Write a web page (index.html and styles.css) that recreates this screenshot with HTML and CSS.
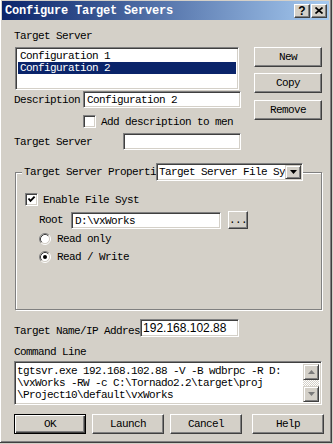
FILE: index.html
```html
<!DOCTYPE html>
<html>
<head>
    <title>Configure Target Servers</title>
    <link rel="stylesheet" href="styles.css">
</head>
<body>
<div class="window">
    <div class="titlebar">
        <span class="title">Configure Target Servers</span>
        <div class="tbtns">
            <span class="tbtn help-q">?</span>
            <span class="tbtn">
                <svg width="8" height="7" viewBox="0 0 8 7"><path d="M0.5 0.5 L7.5 6.5 M7.5 0.5 L0.5 6.5" stroke="#000" stroke-width="1.7"/></svg>
            </span>
        </div>
    </div>

    <div class="client">
        <div class="lbl lbl-top">Target Server</div>
        <div class="top">
            <div class="left">
                <div class="listbox">
                    <div class="item">Configuration 1</div>
                    <div class="item sel">Configuration 2</div>
                </div>
                <div class="row desc-row">
                    <span class="lbl">Description</span>
                    <div class="field w-desc">Configuration 2</div>
                </div>
                <div class="row chk-row">
                    <span class="check"></span>
                    <span class="lbl">Add description to men</span>
                </div>
                <div class="row ts-row">
                    <span class="lbl">Target Server</span>
                    <div class="field w-ts"></div>
                </div>
            </div>
            <div class="side">
                <button class="btn">New</button>
                <button class="btn">Copy</button>
                <button class="btn btn-remove">Remove</button>
            </div>
        </div>

        <div class="group">
            <div class="group-head">
                <span class="head-lbl">Target Server Properti</span>
                <div class="combo">
                    <span class="combo-text">Target Server File Sy</span>
                    <span class="combo-btn">
                        <svg width="7" height="4" viewBox="0 0 7 4"><polygon points="0,0 7,0 3.5,4" fill="#000"/></svg>
                    </span>
                </div>
            </div>
            <div class="g-chk">
                <span class="check">
                    <svg width="9" height="9" viewBox="0 0 9 9"><path d="M1.5 3.5 L3.5 5.8 L7.6 1.6" fill="none" stroke="#000" stroke-width="1.9"/></svg>
                </span>
                <span class="lbl">Enable File Syst</span>
            </div>
            <div class="root-row">
                <span class="lbl">Root</span>
                <div class="field w-root">D:\vxWorks</div>
                <button class="btn btn-dots">...</button>
            </div>
            <div class="radio-row">
                <svg class="radio" width="12" height="12" viewBox="0 0 12 12">
                    <circle cx="6" cy="6" r="4.5" fill="#fff"/>
                    <path d="M2.11 9.89 A5.5 5.5 0 0 1 9.89 2.11" fill="none" stroke="#808080"/>
                    <path d="M9.89 2.11 A5.5 5.5 0 0 1 2.11 9.89" fill="none" stroke="#fff"/>
                    <path d="M2.82 9.18 A4.5 4.5 0 0 1 9.18 2.82" fill="none" stroke="#404040"/>
                    <path d="M9.18 2.82 A4.5 4.5 0 0 1 2.82 9.18" fill="none" stroke="#d4d0c8"/>
                </svg>
                <span class="lbl">Read only</span>
            </div>
            <div class="radio-row radio-2">
                <svg class="radio" width="12" height="12" viewBox="0 0 12 12">
                    <circle cx="6" cy="6" r="4.5" fill="#fff"/>
                    <path d="M2.11 9.89 A5.5 5.5 0 0 1 9.89 2.11" fill="none" stroke="#808080"/>
                    <path d="M9.89 2.11 A5.5 5.5 0 0 1 2.11 9.89" fill="none" stroke="#fff"/>
                    <path d="M2.82 9.18 A4.5 4.5 0 0 1 9.18 2.82" fill="none" stroke="#404040"/>
                    <path d="M9.18 2.82 A4.5 4.5 0 0 1 2.82 9.18" fill="none" stroke="#d4d0c8"/>
                    <circle cx="6" cy="6" r="2" fill="#000"/>
                </svg>
                <span class="lbl">Read / Write</span>
            </div>
        </div>

        <div class="ip-row">
            <span class="lbl">Target Name/IP Addres</span>
            <div class="field w-ip">192.168.102.88</div>
        </div>

        <div class="lbl cmd-lbl">Command Line</div>
        <div class="cmd">
            <div class="cmd-text">tgtsvr.exe 192.168.102.88 -V -B wdbrpc -R D:
\vxWorks -RW -c C:\Tornado2.2\target\proj
\Project10\default\vxWorks</div>
            <div class="scroll">
                <span class="sbtn">
                    <svg width="7" height="4" viewBox="0 0 7 4"><polygon points="0,4 7,4 3.5,0" fill="#7a7a7a"/></svg>
                </span>
                <span class="track"></span>
                <span class="sbtn">
                    <svg width="7" height="4" viewBox="0 0 7 4"><polygon points="0,0 7,0 3.5,4" fill="#7a7a7a"/></svg>
                </span>
            </div>
        </div>

        <div class="buttons">
            <button class="btn btn-wide btn-default">OK</button>
            <button class="btn btn-wide">Launch</button>
            <button class="btn btn-wide">Cancel</button>
            <button class="btn btn-wide btn-help">Help</button>
        </div>
    </div>
</div>
</body>
</html>
```

FILE: styles.css
```css
body {
    margin: 0;
    background: #d4d0c8;
    font-family: "Liberation Mono", monospace;
    font-size: 11px;
    letter-spacing: -0.6px;
    color: #000;
    overflow: hidden;
}
.window {
    width: 333px;
    height: 445px;
    box-sizing: border-box;
    margin: -2px 0 0 -1px;
    border: 1px solid;
    border-color: #d4d0c8 #404040 #404040 #d4d0c8;
    box-shadow: inset 1px 1px #fff, inset -1px -1px #808080;
    padding: 2px;
    background: #d4d0c8;
}
.titlebar {
    height: 19px;
    display: flex;
    align-items: center;
    padding: 0 2px 0 3px;
    background: linear-gradient(to right, #0a246a, #a6caf0);
}
.title {
    flex: 1;
    color: #fff;
    font-weight: bold;
    font-size: 12px;
    letter-spacing: -0.2px;
}
.tbtns {
    display: flex;
    gap: 1px;
}
.tbtn {
    width: 16px;
    height: 14px;
    box-sizing: border-box;
    display: flex;
    align-items: center;
    justify-content: center;
    background: #d4d0c8;
    border: 1px solid;
    border-color: #fff #404040 #404040 #fff;
    box-shadow: inset -1px -1px #808080;
}
.help-q {
    font-family: "Liberation Sans", sans-serif;
    font-weight: bold;
    font-size: 12px;
    letter-spacing: 0;
    line-height: 12px;
}
.client {
    padding: 0 0 0 12px;
}
.lbl {
    line-height: 12px;
    white-space: nowrap;
}
.lbl-top {
    margin-top: 10px;
}
.top {
    display: flex;
    gap: 13px;
    margin-top: 5px;
}
.left {
    width: 227px;
}
.listbox, .field, .check, .combo, .cmd {
    box-sizing: border-box;
    background: #fff;
    border: 1px solid;
    border-color: #808080 #fff #fff #808080;
    box-shadow: inset 1px 1px #404040, inset -1px -1px #d4d0c8;
}
.listbox {
    margin-left: 1px;
    width: 224px;
    height: 43px;
    padding: 2px;
}
.item {
    height: 12px;
    line-height: 12px;
    padding-left: 2px;
}
.item.sel {
    background: #0a246a;
    color: #fff;
}
.row {
    display: flex;
    align-items: center;
    justify-content: space-between;
}
.field {
    height: 17px;
    padding: 2px 3px 0;
    line-height: 12px;
    white-space: nowrap;
}
.desc-row {
    margin-top: 1px;
}
.w-desc {
    width: 158px;
}
.chk-row {
    justify-content: flex-start;
    gap: 5px;
    margin-top: 7px;
    padding-left: 69px;
}
.check {
    width: 13px;
    height: 13px;
    display: flex;
    align-items: center;
    justify-content: center;
    flex: none;
}
.ts-row {
    margin-top: 5px;
}
.w-ts {
    width: 118px;
}
.side {
    width: 68px;
    display: flex;
    flex-direction: column;
    gap: 6px;
}
.btn {
    font-family: inherit;
    font-size: 11px;
    letter-spacing: -0.6px;
    color: #000;
    height: 20px;
    padding: 0;
    box-sizing: border-box;
    background: #d4d0c8;
    border: 1px solid;
    border-color: #fff #404040 #404040 #fff;
    box-shadow: inset -1px -1px #808080;
}
.btn-remove {
    margin-top: 1px;
}
.group {
    margin: 22px 0 0 1px;
    width: 307px;
    height: 138px;
    box-sizing: border-box;
    border: 1px solid #808080;
    box-shadow: inset 1px 1px #fff, 1px 1px #fff;
}
.group-head {
    display: flex;
    align-items: center;
    width: fit-content;
    margin: -10px 0 0 6px;
    padding-left: 2px;
    background: #d4d0c8;
}
.head-lbl {
    white-space: nowrap;
    line-height: 18px;
}
.combo {
    width: 147px;
    height: 18px;
    display: flex;
    align-items: center;
    padding: 2px 1px 2px 2px;
}
.combo-text {
    flex: 1;
    white-space: nowrap;
    line-height: 14px;
}
.combo-btn, .sbtn {
    width: 16px;
    height: 14px;
    box-sizing: border-box;
    flex: none;
    display: flex;
    align-items: center;
    justify-content: center;
    background: #d4d0c8;
    border: 1px solid;
    border-color: #d4d0c8 #404040 #404040 #d4d0c8;
    box-shadow: inset 1px 1px #fff, inset -1px -1px #808080;
}
.g-chk {
    display: flex;
    align-items: center;
    gap: 5px;
    margin: 12px 0 0 9px;
}
.root-row {
    display: flex;
    align-items: center;
    margin: 5px 0 0 23px;
}
.w-root {
    width: 150px;
    margin-left: 8px;
}
.btn-dots {
    width: 20px;
    height: 18px;
    margin-left: 7px;
}
.radio-row {
    display: flex;
    align-items: center;
    gap: 6px;
    margin: 4px 0 0 23px;
}
.radio-2 {
    margin-top: 6px;
}
.ip-row {
    display: flex;
    align-items: flex-end;
    margin-top: 9px;
}
.w-ip {
    width: 99px;
    height: 18px;
    font-family: "Liberation Sans", sans-serif;
    font-size: 12px;
    letter-spacing: 0;
    line-height: 13px;
    padding-left: 2px;
}
.cmd-lbl {
    margin-top: 9px;
}
.cmd {
    margin-top: 3px;
    width: 308px;
    height: 44px;
    display: flex;
    padding: 2px;
}
.cmd-text {
    flex: 1;
    white-space: pre;
    line-height: 12px;
    padding-top: 1px;
}
.scroll {
    width: 16px;
    display: flex;
    flex-direction: column;
}
.sbtn {
    height: 16px;
}
.track {
    flex: 1;
    background: repeating-conic-gradient(#fff 0 25%, #d4d0c8 0 50%) 0 0 / 2px 2px;
}
.buttons {
    display: flex;
    gap: 6px;
    margin-top: 9px;
}
.btn-wide {
    width: 72px;
}
.btn-default {
    border: 1px solid #000;
    box-shadow: inset 1px 1px #fff, inset -1px -1px #404040, inset -2px -2px #808080;
}
.btn-help {
    margin-left: 4px;
}
```
